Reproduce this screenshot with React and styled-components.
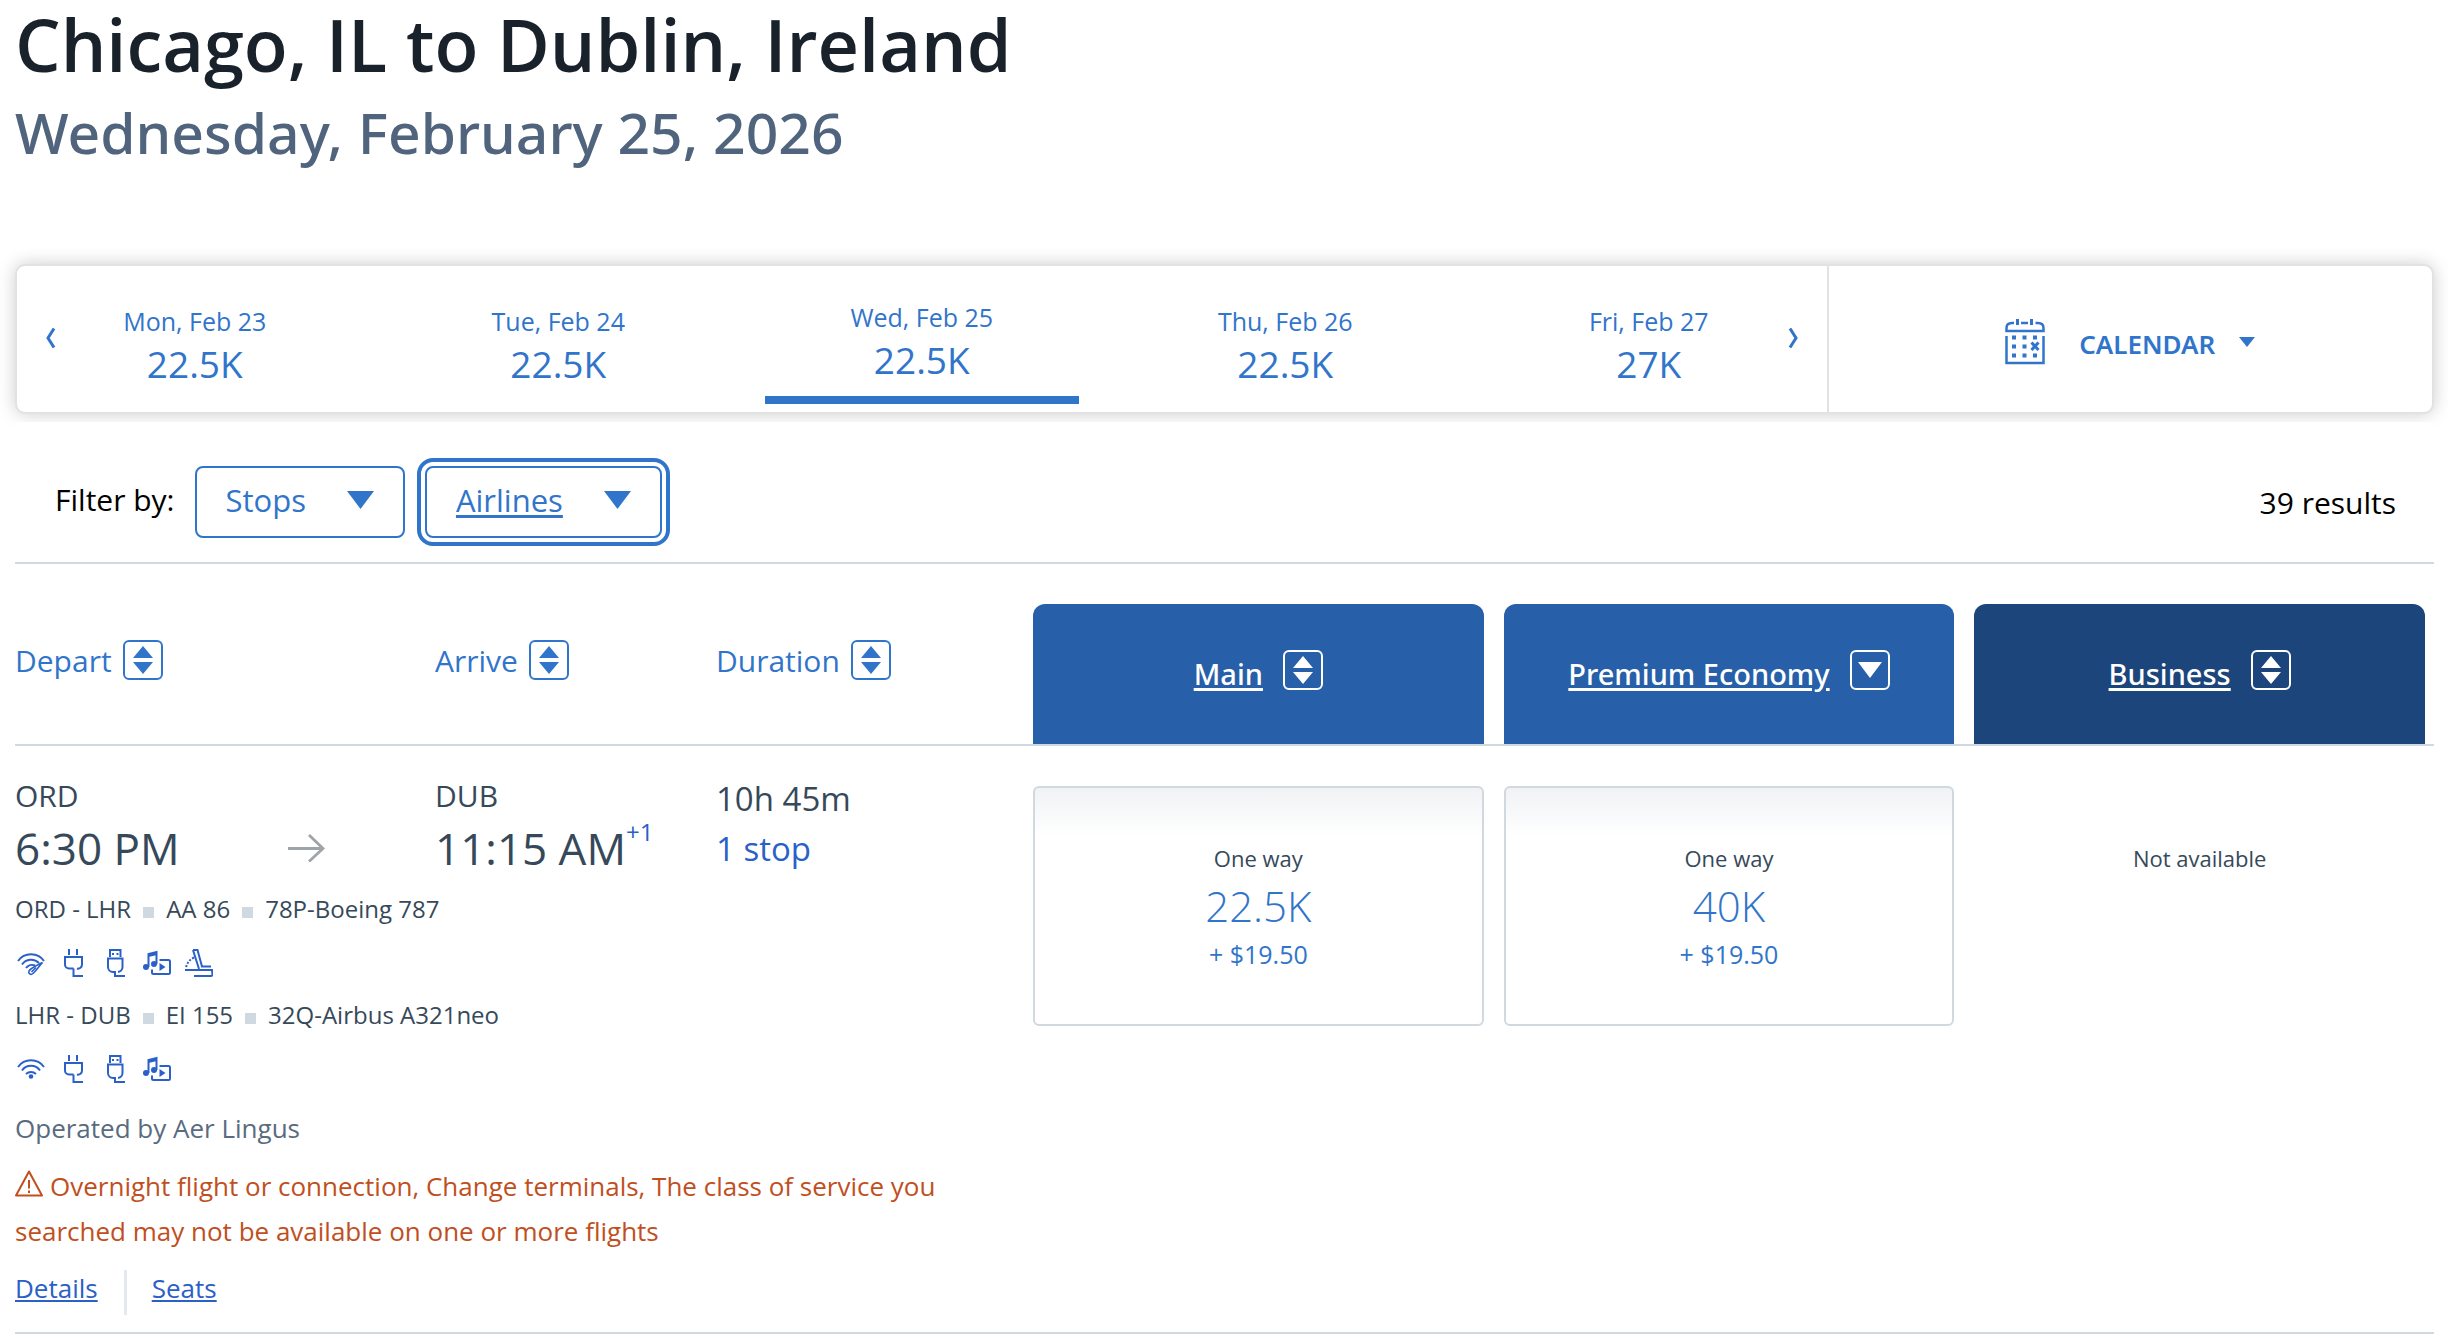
import React, { useState } from 'react'
import styled, { createGlobalStyle } from 'styled-components'

const GlobalStyle = createGlobalStyle`
  * {
    box-sizing: border-box;
  }

  body {
    margin: 0;
    background-color: #ffffff;
    color: #36495a;
    font-family: 'Open Sans', 'Noto Sans', sans-serif;
  }

  button {
    padding: 0;
    border: 0;
    background: none;
    color: inherit;
    font: inherit;
    cursor: pointer;
  }

  h1, h2, p, ul {
    margin: 0;
    padding: 0;
  }

  svg {
    display: block;
    flex-shrink: 0;
  }
`;

const Page = styled.main`
  padding: 0 14px 0 15px;
`;

const Header = styled.header`
  padding-bottom: 96px;
`;

const Title = styled.h1`
  color: #19212b;
  font-size: 72px;
  font-weight: 600;
  line-height: 88px;
`;

const Subtitle = styled.h2`
  margin-top: 8px;
  color: #50657d;
  font-family: 'Noto Sans', sans-serif;
  font-size: 57px;
  font-weight: 500;
  line-height: 72px;
`;

/* date carousel */

const DateBar = styled.section`
  display: flex;
  border: 2px solid #e2e2e2;
  border-radius: 10px;
  background-color: #ffffff;
  box-shadow: 0 0 18px rgba(0, 0, 0, 0.2);
  color: #3175cb;
`;

const Carousel = styled.nav`
  position: relative;
  flex: 1811;
`;

const DateList = styled.ul`
  display: grid;
  grid-template-columns: repeat(5, 1fr);
  margin: 0 -4px;
  list-style: none;
`;

const DateTab = styled.button`
  display: flex;
  flex-direction: column;
  align-items: center;
  width: calc(100% - 50px);
  height: 138px;
  margin: 0 25px 8px;
  padding-top: ${props => props.$active ? '33px' : '37px'};
  border-bottom: 8px solid ${props => props.$active ? '#3175cb' : 'transparent'};

  .DateTab-day {
    font-size: 25px;
    line-height: 36px;
  }

  .DateTab-price {
    font-size: 37px;
    line-height: 50px;
  }
`;

const ArrowButton = styled.button`
  position: absolute;
  top: 62px;
  ${props => props.$side}: 28px;
`;

const CalendarButton = styled.button`
  display: flex;
  flex: 604;
  align-items: center;
  justify-content: center;
  padding-top: 6px;
  border-left: 2px solid #e2e2e2;

  .CalendarButton-label {
    margin: 4px 24px 0 34px;
    font-family: 'Noto Sans', sans-serif;
    font-size: 26px;
    font-weight: 600;
    line-height: 36px;
  }
`;

/* filters */

const FilterBar = styled.section`
  position: relative;
  display: flex;
  align-items: center;
  gap: 20px;
  margin-top: 8px;
  padding: 44px 38px 24px 40px;
  border-bottom: 2px solid #d0d9df;
  background-color: #ffffff;
  color: #000000;
  font-size: 30px;
`;

const FilterLabel = styled.span`
  padding-bottom: 6px;
`;

const FilterButton = styled.button`
  display: flex;
  align-items: center;
  gap: 41px;
  height: 72px;
  padding: 0 29px 4px;
  border: 2px solid #3175cb;
  border-radius: 8px;
  color: #3175cb;
  font-size: 31px;
  outline: ${props => props.$focused ? '4px solid #3175cb' : 'none'};
  outline-offset: 4px;

  .FilterButton-text {
    text-decoration: ${props => props.$focused ? 'underline' : 'none'};
    text-decoration-thickness: 3px;
    text-underline-offset: 3px;
  }
`;

const Results = styled.span`
  margin-left: auto;
`;

/* results */

const Columns = styled.div`
  display: grid;
  grid-template-columns: 1018fr 1392fr;
  padding-right: 9px;
  border-bottom: 2px solid #d0d9df;
`;

const SortColumns = styled(Columns)`
  padding-top: 40px;
`;

const FlightColumns = styled.div`
  display: grid;
  grid-template-columns: 420fr 281fr 317fr;
`;

const SortList = styled(FlightColumns)`
  align-items: start;
  padding-top: 36px;
`;

const FareColumns = styled.div`
  display: grid;
  grid-template-columns: repeat(3, 1fr);
  gap: 20px;
`;

const SortButton = styled.button`
  display: flex;
  align-items: center;
  justify-self: start;
  gap: 11px;
  height: 40px;
  color: #3175cb;
  font-size: 30px;
`;

const CabinButton = styled.button`
  display: flex;
  align-items: center;
  justify-content: center;
  gap: 20px;
  height: 140px;
  padding-bottom: 8px;
  border-radius: 12px 12px 0 0;
  background-color: ${props => props.$dark ? '#1c457b' : '#2760a8'};
  color: #ffffff;
  font-family: 'Noto Sans', sans-serif;
  font-size: 29px;
  font-weight: 500;

  .CabinButton-name {
    padding-top: 6px;
    text-decoration: underline;
    text-decoration-thickness: 3px;
    text-underline-offset: 3px;
  }
`;

const SortBox = styled.span`
  display: flex;
  align-items: center;
  justify-content: center;
  width: 40px;
  height: 40px;
  border: 2px solid currentColor;
  border-radius: 6px;
`;

const Flight = styled.div`
  padding: 28px 0 17px;
`;

const Airport = styled.p`
  font-size: 30px;
  line-height: 44px;
`;

const Time = styled.p`
  display: flex;
  font-size: 44px;
  line-height: 60px;

  .Time-nextDay {
    color: #2a60c8;
    font-size: 24px;
    line-height: 28px;
  }
`;

const DepartTime = styled.div`
  display: flex;
  align-items: center;
  justify-content: space-between;
  padding-right: 110px;
`;

const Duration = styled.div`
  font-size: 33px;
  line-height: 50px;

  .Duration-stops {
    color: #2a60c8;
  }
`;

const Segment = styled.div`
  display: flex;
  align-items: baseline;
  gap: 12px;
  margin-top: ${props => props.$first ? '13px' : '20px'};
  font-size: 24px;
  line-height: 36px;
`;

const Dot = styled.span`
  width: 11px;
  height: 11px;
  background-color: #d0d9df;
`;

const Amenities = styled.div`
  display: flex;
  gap: 14px;
  margin: 22px 0 0 2px;
  color: #2a60c8;
`;

const Operated = styled.p`
  margin-top: 25px;
  color: #596b7f;
  font-size: 26px;
  line-height: 40px;
`;

const Warning = styled.p`
  margin-top: 16px;
  color: #c14f1e;
  font-size: 26px;
  line-height: 45px;

  svg {
    display: inline-block;
    margin-right: 7px;
    vertical-align: -1px;
  }
`;

const Links = styled.div`
  display: flex;
  margin-top: 16px;
  font-size: 26px;
  line-height: 36px;
`;

const Link = styled.a`
  color: #2a60c8;
  text-decoration-thickness: 2px;
  text-underline-offset: 2px;

  & + & {
    height: 45px;
    margin-left: 26px;
    padding-left: 25px;
    border-left: 3px solid #e4e9ee;
  }
`;

const Fares = styled(FareColumns)`
  align-items: start;
  padding-top: 40px;
  text-align: center;
`;

const FareCard = styled.button`
  display: flex;
  flex-direction: column;
  align-items: center;
  justify-content: center;
  height: 240px;
  border: 2px solid #d0d9df;
  border-radius: 6px;
  background: linear-gradient(#f0f2f5, #ffffff 48px);
  color: #3175cb;

  .FareCard-type {
    color: #36495a;
    font-size: 22px;
    line-height: 32px;
  }

  .FareCard-miles {
    font-size: 42px;
    font-weight: 300;
    line-height: 64px;
  }

  .FareCard-taxes {
    font-size: 25px;
    line-height: 32px;
  }
`;

const Unavailable = styled.p`
  padding-top: 56px;
  font-size: 22px;
  line-height: 32px;
`;

/* icons */

function Caret({ width, height }) {
  return (
    <svg width={width} height={height} viewBox='0 0 20 20' preserveAspectRatio='none' fill='currentColor'>
      <path d='M0 0H20L10 20Z' />
    </svg>
  )
}

function SortIcon({ down }) {
  return (
    <SortBox>
      <svg width='24' height='28' viewBox='0 0 24 28' fill='currentColor'>
        {down
          ? <path d='M0 6H24L12 22Z' />
          : <path d='M12 0L22 12H2ZM2 16H22L12 28Z' />}
      </svg>
    </SortBox>
  )
}

function Chevron({ flip }) {
  return (
    <svg width='11' height='20' viewBox='0 0 11 20' fill='none' stroke='currentColor' strokeWidth='3'>
      <path d={flip ? 'M2 0.5L8 10L2 19.5' : 'M9 0.5L3 10L9 19.5'} />
    </svg>
  )
}

function CalendarIcon() {
  return (
    <svg width='40' height='46' viewBox='0 0 40 46' fill='none' stroke='currentColor' strokeWidth='2.5'>
      <path d='M12.5 0V6M26.5 0V6' strokeWidth='3' />
      <path d='M9 4H7Q1.5 4 1.5 9V12H38.5V9Q38.5 4 33 4H30.5M16 4H23' />
      <path d='M1.5 17V44H38.5V17' />
      <path d='M7 18.5H11M17.5 18.5H21.5M28 18.5H32M7 27.5H11M17.5 27.5H21.5M7 36.5H11M17.5 36.5H21.5M28 36.5H32' strokeWidth='4' />
      <path d='M26.5 23.5L33.5 31M33.5 23.5L26.5 31' strokeWidth='3' />
    </svg>
  )
}

function RightArrow() {
  return (
    <svg width='37' height='28' viewBox='0 0 37 28' fill='none' stroke='#9da5aa' strokeWidth='2.8'>
      <path d='M0 14.5H35M21 1L35 14.5L21 27.5' />
    </svg>
  )
}

function WarningIcon() {
  return (
    <svg width='28' height='27' viewBox='0 0 28 27' fill='none' stroke='currentColor' strokeWidth='2' strokeLinejoin='round'>
      <path d='M14 1.5L27 25.5H1Z' />
      <path d='M14 10V18.5M14 20.5V23' />
    </svg>
  )
}

const amenityPaths = {
  wifiMessage: (
    <>
      <path d='M1 12A16 16 0 0 1 27 12M5 15.5A11 11 0 0 1 22 14M9 19A7.5 7.5 0 0 1 18 16.5' />
      <path d='M25.5 13.5C21 16 14 18.5 12 22C11 24.5 13.5 26.5 16 24.5C19 22 21.5 18 25.5 13.5ZM14.5 23L19 18.5' strokeWidth='1.6' />
    </>
  ),
  wifi: (
    <>
      <path d='M1 12A16 16 0 0 1 27 12M5 15.5A11 11 0 0 1 23 15.5M9 19A7.5 7.5 0 0 1 19 19' />
      <circle cx='14' cy='21.5' r='2.3' fill='currentColor' stroke='none' />
    </>
  ),
  power: (
    <>
      <path d='M10 0V6M18 0V6' />
      <path d='M14.5 19.5H10A4 4 0 0 1 6 15.5V8H23V15.5A4 4 0 0 1 18 19.5' />
      <path d='M14.5 19.5V27H24' />
    </>
  ),
  usb: (
    <>
      <path d='M9 8V1H19.5V8' />
      <path d='M11 5H13M15.5 5H17.5' />
      <path d='M15 23H12A5 5 0 0 1 7 18V9.5H21.5V18A5 5 0 0 1 17 23' />
      <path d='M14 23V27H24' />
    </>
  ),
  media: (
    <>
      <path d='M5.5 18V5L13.5 3V15M5.5 7L13.5 5' />
      <circle cx='3' cy='18' r='3' fill='currentColor' stroke='none' />
      <circle cx='11' cy='15' r='3' fill='currentColor' stroke='none' />
      <path d='M16.5 11H25.5Q27 11 27 12.5V23.5Q27 25 25.5 25H10.5Q9 25 9 23.5V20.5' />
      <path d='M16.5 14L22.5 18L16.5 22Z' fill='currentColor' stroke='none' />
    </>
  ),
  seat: (
    <>
      <path d='M8 1H12.5L17 17.5H26M8 1L14 20' />
      <path d='M0 21H27L27.5 26Q27 27 26 27H9' />
      <path d='M9 8.5Q2 12 1 19' strokeDasharray='2 1.6' />
    </>
  ),
}

const amenityLabels = {
  wifiMessage: 'Wi-Fi with messaging',
  wifi: 'Wi-Fi',
  power: 'Power outlet',
  usb: 'USB power',
  media: 'Entertainment',
  seat: 'Lie-flat seat',
}

function AmenityIcon({ name }) {
  return (
    <svg width='28' height='28' viewBox='0 0 28 28' fill='none' stroke='currentColor' strokeWidth='2' role='img' aria-label={amenityLabels[name]}>
      {amenityPaths[name]}
    </svg>
  )
}

/* data */

const dates = [
  { day: 'Mon, Feb 23', price: '22.5K' },
  { day: 'Tue, Feb 24', price: '22.5K' },
  { day: 'Wed, Feb 25', price: '22.5K' },
  { day: 'Thu, Feb 26', price: '22.5K' },
  { day: 'Fri, Feb 27', price: '27K' },
]

const cabins = [
  { name: 'Main' },
  { name: 'Premium Economy', sorted: true },
  { name: 'Business', dark: true },
]

const segments = [
  {
    route: 'ORD - LHR',
    flight: 'AA 86',
    plane: '78P-Boeing 787',
    amenities: ['wifiMessage', 'power', 'usb', 'media', 'seat'],
  },
  {
    route: 'LHR - DUB',
    flight: 'EI 155',
    plane: '32Q-Airbus A321neo',
    amenities: ['wifi', 'power', 'usb', 'media'],
  },
]

const fares = [
  { cabin: 'Main', miles: '22.5K', taxes: '+ $19.50' },
  { cabin: 'Premium Economy', miles: '40K', taxes: '+ $19.50' },
]

function DatePicker() {
  const [active, setActive] = useState(2)

  return (
    <DateBar>
      <Carousel aria-label='Dates'>
        <DateList>
          {dates.map((date, index) => (
            <li key={date.day}>
              <DateTab type='button' $active={index === active} onClick={() => setActive(index)}>
                <span className='DateTab-day'>{date.day}</span>
                <span className='DateTab-price'>{date.price}</span>
              </DateTab>
            </li>
          ))}
        </DateList>
        <ArrowButton type='button' $side='left' aria-label='Previous dates'>
          <Chevron />
        </ArrowButton>
        <ArrowButton type='button' $side='right' aria-label='Next dates'>
          <Chevron flip />
        </ArrowButton>
      </Carousel>
      <CalendarButton type='button'>
        <CalendarIcon />
        <span className='CalendarButton-label'>CALENDAR</span>
        <Caret width={16} height={10} />
      </CalendarButton>
    </DateBar>
  )
}

function Filters() {
  const [focused, setFocused] = useState('Airlines')

  return (
    <FilterBar>
      <FilterLabel>Filter by:</FilterLabel>
      {['Stops', 'Airlines'].map(name => (
        <FilterButton key={name} type='button' $focused={name === focused} onClick={() => setFocused(name)}>
          <span className='FilterButton-text'>{name}</span>
          <Caret width={27} height={18} />
        </FilterButton>
      ))}
      <Results>39 results</Results>
    </FilterBar>
  )
}

function SortHeader() {
  return (
    <SortColumns>
      <SortList>
        {['Depart', 'Arrive', 'Duration'].map(name => (
          <SortButton key={name} type='button'>
            {name}
            <SortIcon />
          </SortButton>
        ))}
      </SortList>
      <FareColumns>
        {cabins.map(cabin => (
          <CabinButton key={cabin.name} type='button' $dark={cabin.dark}>
            <span className='CabinButton-name'>{cabin.name}</span>
            <SortIcon down={cabin.sorted} />
          </CabinButton>
        ))}
      </FareColumns>
    </SortColumns>
  )
}

function FlightItem() {
  return (
    <Columns>
      <Flight>
        <FlightColumns>
          <div>
            <Airport>ORD</Airport>
            <DepartTime>
              <Time>6:30 PM</Time>
              <RightArrow />
            </DepartTime>
          </div>
          <div>
            <Airport>DUB</Airport>
            <Time>
              11:15 AM
              <span className='Time-nextDay'>+1</span>
            </Time>
          </div>
          <Duration>
            <p>10h 45m</p>
            <p className='Duration-stops'>1 stop</p>
          </Duration>
        </FlightColumns>

        {segments.map((segment, index) => (
          <React.Fragment key={segment.route}>
            <Segment $first={index === 0}>
              <span>{segment.route}</span>
              <Dot />
              <span>{segment.flight}</span>
              <Dot />
              <span>{segment.plane}</span>
            </Segment>
            <Amenities>
              {segment.amenities.map(name => <AmenityIcon key={name} name={name} />)}
            </Amenities>
          </React.Fragment>
        ))}

        <Operated>Operated by Aer Lingus</Operated>
        <Warning>
          <WarningIcon />
          Overnight flight or connection, Change terminals, The class of service you searched may not be available on one or more flights
        </Warning>
        <Links>
          <Link href='#details'>Details</Link>
          <Link href='#seats'>Seats</Link>
        </Links>
      </Flight>

      <Fares>
        {fares.map(fare => (
          <FareCard key={fare.cabin} type='button'>
            <span className='FareCard-type'>One way</span>
            <span className='FareCard-miles'>{fare.miles}</span>
            <span className='FareCard-taxes'>{fare.taxes}</span>
          </FareCard>
        ))}
        <Unavailable>Not available</Unavailable>
      </Fares>
    </Columns>
  )
}

function App() {
  return (
    <Page>
      <GlobalStyle />
      <Header>
        <Title>Chicago, IL to Dublin, Ireland</Title>
        <Subtitle>Wednesday, February 25, 2026</Subtitle>
      </Header>
      <DatePicker />
      <Filters />
      <SortHeader />
      <FlightItem />
    </Page>
  )
}

export default App
